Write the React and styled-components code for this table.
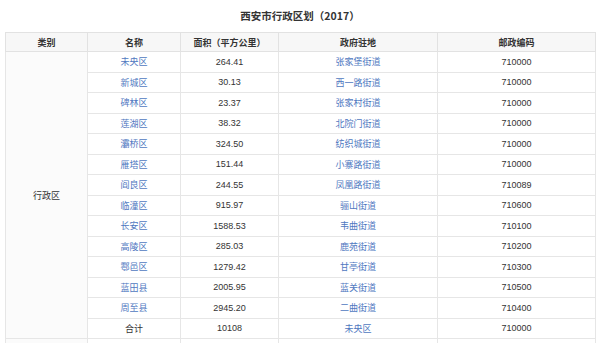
import React from 'react';
import styled, { createGlobalStyle } from 'styled-components';

const GlobalStyle = createGlobalStyle`
  body {
    margin: 0;
    background: #fff;
    font-family: "Liberation Sans", "Noto Sans CJK SC", sans-serif;
  }
`;

const Page = styled.div`
  width: 600px;
  height: 343px;
  overflow: hidden;
  padding: 0 5px;
  box-sizing: border-box;
`;

const Title = styled.div`
  height: 32px;
  display: flex;
  align-items: center;
  justify-content: center;
  font-size: 10.5px;
  font-weight: bold;
  color: #333;
  font-family: "Noto Sans CJK SC", sans-serif;
  padding-bottom: 1px;
  box-sizing: border-box;
`;

const Table = styled.table`
  width: 590px;
  border-collapse: collapse;
  table-layout: fixed;
  border: 1px solid #e6e6e6;
`;

const HeadCell = styled.th`
  height: 18px;
  padding: 0;
  background: #f7f7f7;
  border: 1px solid #e2e2e2;
  font-size: 9px;
  font-weight: bold;
  color: #333;
  text-align: center;
  font-family: "Noto Sans CJK SC", sans-serif;
`;

const Cell = styled.td`
  height: 19.5px;
  padding: 0;
  border: 1px solid #e6e6e6;
  font-size: 9px;
  color: #333;
  text-align: center;
  font-family: ${(p) => (p.$cjk ? '"Noto Sans CJK SC", sans-serif' : '"Liberation Sans", sans-serif')};
`;

const CategoryCell = styled(Cell)`
  background: #fbfbfb;
  font-family: "Noto Sans CJK SC", sans-serif;
`;

const Link = styled.span`
  color: #4f78bf;
`;

const rows = [
  ['未央区', '264.41', '张家堡街道', '710000'],
  ['新城区', '30.13', '西一路街道', '710000'],
  ['碑林区', '23.37', '张家村街道', '710000'],
  ['莲湖区', '38.32', '北院门街道', '710000'],
  ['灞桥区', '324.50', '纺织城街道', '710000'],
  ['雁塔区', '151.44', '小寨路街道', '710000'],
  ['阎良区', '244.55', '凤凰路街道', '710089'],
  ['临潼区', '915.97', '骊山街道', '710600'],
  ['长安区', '1588.53', '韦曲街道', '710100'],
  ['高陵区', '285.03', '鹿苑街道', '710200'],
  ['鄠邑区', '1279.42', '甘亭街道', '710300'],
  ['蓝田县', '2005.95', '蓝关街道', '710500'],
  ['周至县', '2945.20', '二曲街道', '710400'],
];

export default function App() {
  return (
    <>
      <GlobalStyle />
      <Page>
        <Title>西安市行政区划（2017）</Title>
        <Table>
          <colgroup>
            <col style={{ width: 82 }} />
            <col style={{ width: 93 }} />
            <col style={{ width: 98 }} />
            <col style={{ width: 159 }} />
            <col style={{ width: 158 }} />
          </colgroup>
          <thead>
            <tr>
              <HeadCell>类别</HeadCell>
              <HeadCell>名称</HeadCell>
              <HeadCell>面积（平方公里）</HeadCell>
              <HeadCell>政府驻地</HeadCell>
              <HeadCell>邮政编码</HeadCell>
            </tr>
          </thead>
          <tbody>
            {rows.map((r, i) => (
              <tr key={r[0]}>
                {i === 0 && <CategoryCell rowSpan={14}>行政区</CategoryCell>}
                <Cell $cjk><Link>{r[0]}</Link></Cell>
                <Cell>{r[1]}</Cell>
                <Cell $cjk><Link>{r[2]}</Link></Cell>
                <Cell>{r[3]}</Cell>
              </tr>
            ))}
            <tr>
              <Cell $cjk>合计</Cell>
              <Cell>10108</Cell>
              <Cell $cjk><Link>未央区</Link></Cell>
              <Cell>710000</Cell>
            </tr>
            <tr>
              <CategoryCell />
              <Cell />
              <Cell />
              <Cell />
              <Cell />
            </tr>
          </tbody>
        </Table>
      </Page>
    </>
  );
}
